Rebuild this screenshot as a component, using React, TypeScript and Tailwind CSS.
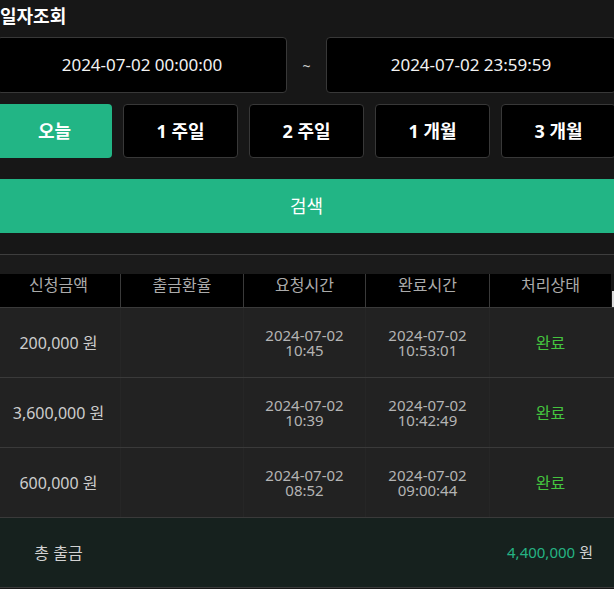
import React from "react";

type Row = {
  amount: string;
  reqDate: string;
  reqTime: string;
  doneDate: string;
  doneTime: string;
  status: string;
};

const rows: Row[] = [
  { amount: "200,000 원", reqDate: "2024-07-02", reqTime: "10:45", doneDate: "2024-07-02", doneTime: "10:53:01", status: "완료" },
  { amount: "3,600,000 원", reqDate: "2024-07-02", reqTime: "10:39", doneDate: "2024-07-02", doneTime: "10:42:49", status: "완료" },
  { amount: "600,000 원", reqDate: "2024-07-02", reqTime: "08:52", doneDate: "2024-07-02", doneTime: "09:00:44", status: "완료" },
];

const headers = ["신청금액", "출금환율", "요청시간", "완료시간", "처리상태"];
const periods = ["오늘", "1 주일", "2 주일", "1 개월", "3 개월"];

const cols = "grid grid-cols-[123px_123px_122px_124px_122px_5px]";

export default function App() {
  return (
    <div
      className="h-[589px] w-[614px] overflow-hidden bg-[#171717]"
      style={{ fontFamily: '"Noto Sans", "Noto Sans CJK KR", sans-serif' }}
    >
      <div className="-ml-[3px] w-[619px]">
        {/* 일자조회 */}
        <div className="h-[37px] pl-[3px] pt-[2px] text-[18px] font-bold leading-[28px] text-white">
          일자조회
        </div>

        <div className="flex h-[56px]">
          <div className="flex w-[290px] items-center justify-center rounded-[4px] border border-[#383838] bg-black text-[17px] text-[#f2f2f2]">
            2024-07-02 00:00:00
          </div>
          <div className="flex flex-1 items-center justify-center text-[14px] text-[#cfcfcf]">~</div>
          <div className="flex w-[290px] items-center justify-center rounded-[4px] border border-[#383838] bg-black text-[17px] text-[#f2f2f2]">
            2024-07-02 23:59:59
          </div>
        </div>

        {/* 기간 버튼 */}
        <div className="mt-[11px] grid h-[54px] grid-cols-5 gap-[11px]">
          {periods.map((p, i) => (
            <div
              key={p}
              className={
                i === 0
                  ? "flex items-center justify-center rounded-[4px] bg-[#22b585] text-[18px] font-bold text-white"
                  : "flex items-center justify-center rounded-[4px] border border-[#383838] bg-black text-[18px] font-bold text-white"
              }
            >
              {p}
            </div>
          ))}
        </div>

        <div className="mt-[21px] flex h-[54px] items-center justify-center bg-[#22b585] text-[18px] text-white">
          검색
        </div>

        <div className="mt-[21px] h-[20px] border-t border-[#3e3e3e] bg-[#1b1b1b]" />

        {/* 테이블 */}
        <div className={`${cols} h-[33px] bg-black`}>
          {headers.map((h, i) => (
            <div
              key={h}
              className={`flex items-start justify-center pt-[1px] text-[16px] leading-[20px] text-[#ababab] ${
                i > 0 ? "border-l border-[#3a3a3a]" : ""
              }`}
            >
              {h}
            </div>
          ))}
          <div className="relative bg-[#171717]">
            <div className="absolute left-[1px] top-[17px] h-[16px] w-[3px] bg-[#d9d9d9]" />
          </div>
        </div>

        {rows.map((r, i) => (
          <div key={i} className={`${cols} h-[70px] border-t border-[#3a3a3a] bg-[#222222]`}>
            <div className="flex items-center justify-center text-[16px] text-[#cdcdcd]">{r.amount}</div>
            <div className="border-l border-[#262626]" />
            <div className="flex flex-col items-center justify-center border-l border-[#262626] text-[15px] leading-[15px] text-[#b4b4b4]">
              <span>{r.reqDate}</span>
              <span>{r.reqTime}</span>
            </div>
            <div className="flex flex-col items-center justify-center border-l border-[#262626] text-[15px] leading-[15px] text-[#b4b4b4]">
              <span>{r.doneDate}</span>
              <span>{r.doneTime}</span>
            </div>
            <div className="flex items-center justify-center border-l border-[#262626] text-[16px] text-[#45c43f]">
              {r.status}
            </div>
            <div />
          </div>
        ))}

        {/* 합계 */}
        <div className={`${cols} h-[71px] border-y border-[#3a3a3a] bg-[#16211e]`}>
          <div className="flex items-center justify-center text-[16px] text-[#d2d2d2]">총 출금</div>
          <div className="col-span-3" />
          <div className="flex items-center justify-center text-[15px]">
            <span className="text-[#25b383]">4,400,000</span>
            <span className="ml-[4px] text-[#d2d2d2]">원</span>
          </div>
          <div />
        </div>
      </div>
    </div>
  );
}
